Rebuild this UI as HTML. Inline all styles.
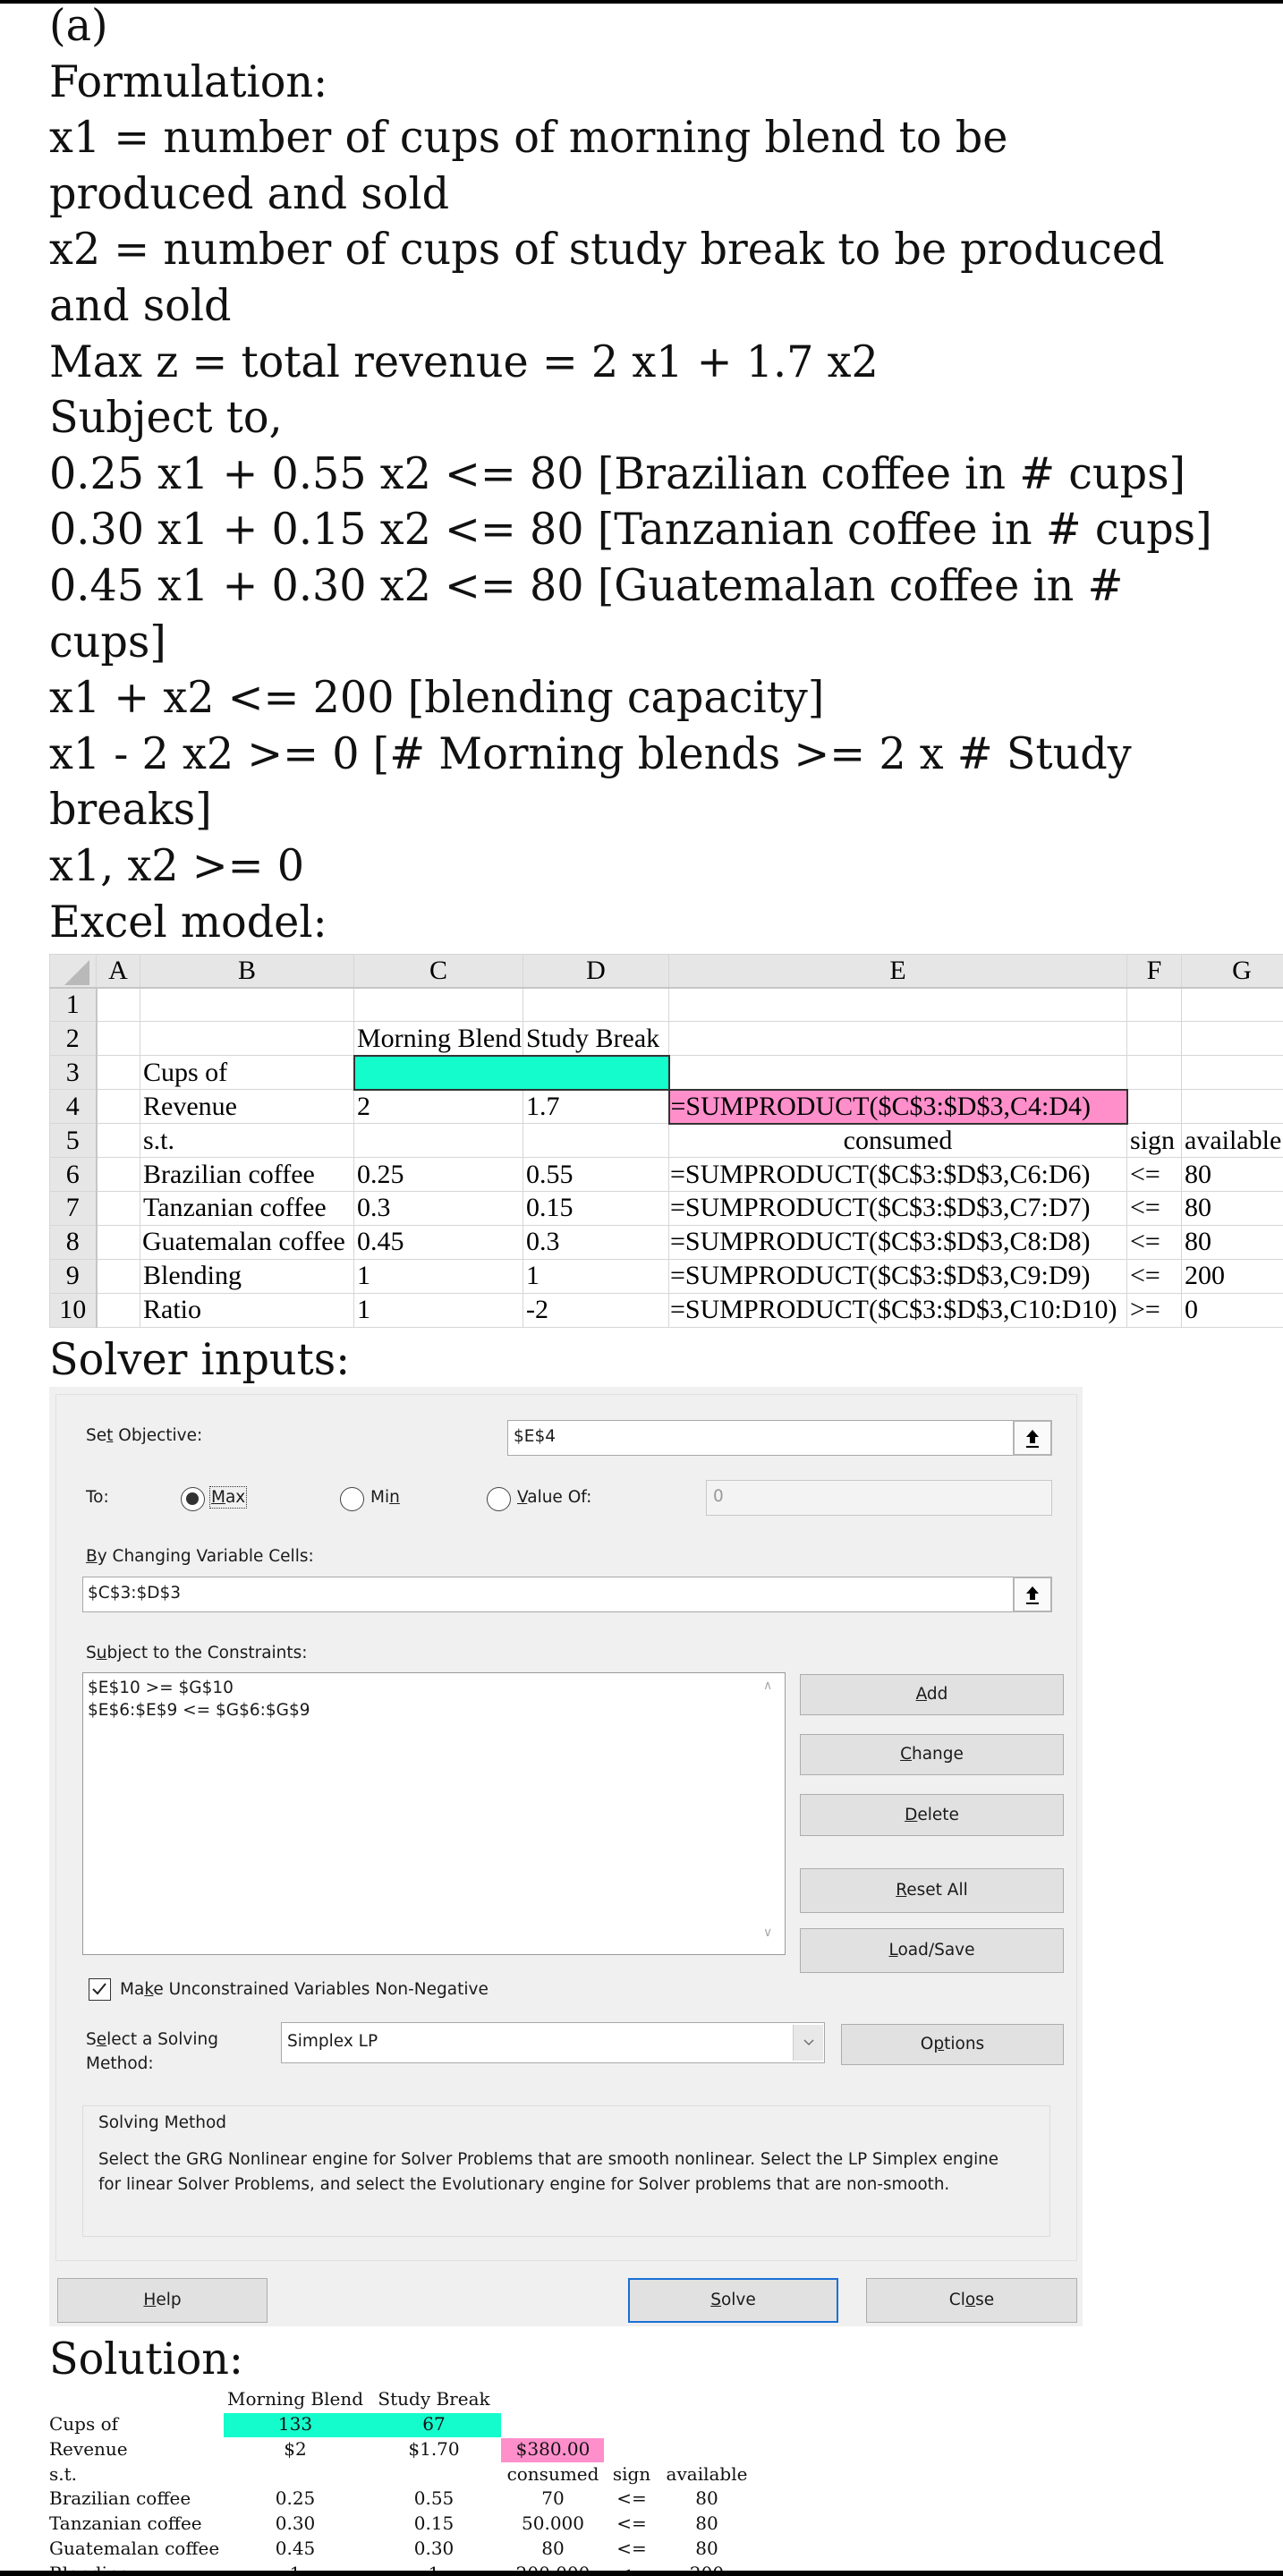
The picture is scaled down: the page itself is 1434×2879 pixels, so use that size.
<!DOCTYPE html>
<html><head><meta charset="utf-8">
<style>
*{margin:0;padding:0;box-sizing:border-box}
html,body{width:1434px;height:2879px;background:#fff;overflow:hidden;position:relative}
body{font-family:"DejaVu Serif",serif;color:#000}
.topbar{position:absolute;left:0;top:0;width:1434px;height:4px;background:#000}
.botbar{position:absolute;left:0;top:2873px;width:1434px;height:6px;background:#000}
.h{position:absolute;left:55px;font-family:"DejaVu Serif",serif;font-size:49px;line-height:62.6px;white-space:nowrap;color:#111;transform:scaleX(0.972);transform-origin:0 0}
/* excel */
table.xl{position:absolute;left:55px;top:1066px;border-collapse:collapse;table-layout:fixed;font-family:"Liberation Serif",serif;font-size:30px;width:1400px}
table.xl td{border:1px solid #d6d6d6;height:37.9px;padding:0 3px;white-space:nowrap;overflow:hidden;line-height:36px}
table.xl tr.hd td{background:#e6e6e6;text-align:center;height:37px;font-size:30px;border-bottom:2px solid #c6c6c6}
table.xl td.rn{background:#e6e6e6;text-align:center;padding:0;font-size:30px;border-right:2px solid #c6c6c6}
.teal{background:#14fccc}
.pink{background:#ff8fcb}
/* dialog */
.dlg{position:absolute;left:55px;top:1550px;width:1155px;height:1050px;background:#f0f0f0}
.inner{position:absolute;left:62px;top:1558px;width:1142px;height:969px;border:1px solid #e0e0e0;background:#f0f0f0}
.s{position:absolute;font-family:"DejaVu Sans",sans-serif;font-size:18.5px;color:#1a1a1a;white-space:nowrap}
.inp{position:absolute;background:#fff;border:1px solid #a8a8a8}
.btn{position:absolute;background:#e1e1e1;border:1px solid #adadad;font-family:"DejaVu Sans",sans-serif;font-size:18.5px;color:#1a1a1a;text-align:center}
.ab{position:absolute;width:44px;height:40px;border:2px solid #b4b4b4;background:#fafafa}
.radio{position:absolute;width:27px;height:27px;border:1.5px solid #444;border-radius:50%;background:#fff}
u{text-decoration:underline}
.sol{position:absolute;font-family:"DejaVu Serif",serif;font-size:20px;white-space:nowrap;color:#111}
.c{position:absolute;transform:translateX(-50%);text-align:center}
</style></head><body>
<div class="topbar"></div>

<div class="h" style="top:-2px">(a)</div>
<div class="h" style="top:60.6px">Formulation:</div>
<div class="h" style="top:123.2px">x1 = number of cups of morning blend to be</div>
<div class="h" style="top:185.8px">produced and sold</div>
<div class="h" style="top:248.4px">x2 = number of cups of study break to be produced</div>
<div class="h" style="top:311px">and sold</div>
<div class="h" style="top:373.6px">Max z = total revenue = 2 x1 + 1.7 x2</div>
<div class="h" style="top:436.2px">Subject to,</div>
<div class="h" style="top:498.8px">0.25 x1 + 0.55 x2 &lt;= 80 [Brazilian coffee in # cups]</div>
<div class="h" style="top:561.4px">0.30 x1 + 0.15 x2 &lt;= 80 [Tanzanian coffee in # cups]</div>
<div class="h" style="top:624px">0.45 x1 + 0.30 x2 &lt;= 80 [Guatemalan coffee in #</div>
<div class="h" style="top:686.6px">cups]</div>
<div class="h" style="top:749.2px">x1 + x2 &lt;= 200 [blending capacity]</div>
<div class="h" style="top:811.8px">x1 - 2 x2 &gt;= 0 [# Morning blends &gt;= 2 x # Study</div>
<div class="h" style="top:874.4px">breaks]</div>
<div class="h" style="top:937px">x1, x2 &gt;= 0</div>
<div class="h" style="top:999.6px">Excel model:</div>

<table class="xl">
<colgroup><col style="width:52px"><col style="width:49px"><col style="width:239px"><col style="width:189px"><col style="width:163px"><col style="width:512px"><col style="width:61px"><col style="width:135px"></colgroup>
<tr class="hd"><td style="position:relative"><svg width="40" height="34" style="position:absolute;left:10px;top:2px"><polygon points="34,4 34,32 6,32" fill="#b9b9b9"/></svg></td><td>A</td><td>B</td><td>C</td><td>D</td><td>E</td><td>F</td><td>G</td></tr>
<tr><td class="rn">1</td><td></td><td></td><td></td><td></td><td></td><td></td><td></td></tr>
<tr><td class="rn">2</td><td></td><td></td><td>Morning Blend</td><td>Study Break</td><td></td><td></td><td></td></tr>
<tr><td class="rn">3</td><td></td><td>Cups of</td><td class="teal" style="border:2px solid #333;border-right:none"></td><td class="teal" style="border:2px solid #333;border-left:none"></td><td></td><td></td><td></td></tr>
<tr><td class="rn">4</td><td></td><td>Revenue</td><td>2</td><td>1.7</td><td class="pink" style="border:2px solid #333;padding:0 1px">=SUMPRODUCT($C$3:$D$3,C4:D4)</td><td></td><td></td></tr>
<tr><td class="rn">5</td><td></td><td>s.t.</td><td></td><td></td><td style="text-align:center">consumed</td><td>sign</td><td>available</td></tr>
<tr><td class="rn">6</td><td></td><td>Brazilian coffee</td><td>0.25</td><td>0.55</td><td style="padding:0 1px">=SUMPRODUCT($C$3:$D$3,C6:D6)</td><td>&lt;=</td><td>80</td></tr>
<tr><td class="rn">7</td><td></td><td>Tanzanian coffee</td><td>0.3</td><td>0.15</td><td style="padding:0 1px">=SUMPRODUCT($C$3:$D$3,C7:D7)</td><td>&lt;=</td><td>80</td></tr>
<tr><td class="rn">8</td><td></td><td style="padding-left:2px">Guatemalan coffee</td><td>0.45</td><td>0.3</td><td style="padding:0 1px">=SUMPRODUCT($C$3:$D$3,C8:D8)</td><td>&lt;=</td><td>80</td></tr>
<tr><td class="rn">9</td><td></td><td>Blending</td><td>1</td><td>1</td><td style="padding:0 1px">=SUMPRODUCT($C$3:$D$3,C9:D9)</td><td>&lt;=</td><td>200</td></tr>
<tr><td class="rn">10</td><td></td><td>Ratio</td><td>1</td><td>-2</td><td style="padding:0 1px">=SUMPRODUCT($C$3:$D$3,C10:D10)</td><td>&gt;=</td><td>0</td></tr>
</table>

<div class="h" style="top:1489px">Solver inputs:</div>

<div class="dlg"></div>
<div class="inner"></div>
<div class="s" style="left:96px;top:1594px">Se<u>t</u> Objective:</div>
<div class="inp" style="left:567px;top:1587px;width:609px;height:40px"></div>
<div class="s" style="left:574px;top:1595px">$E$4</div>
<div class="ab" style="left:1132px;top:1587px"><svg width="40" height="36"><path d="M20 9 L27 17 L23 17 L23 24 L17 24 L17 17 L13 17 Z" fill="#000"/><rect x="13" y="27" width="14" height="2" fill="#000"/></svg></div>

<div class="s" style="left:96px;top:1663px">To:</div>
<div class="radio" style="left:202px;top:1662px"><div style="position:absolute;left:5px;top:5px;width:14px;height:14px;border-radius:50%;background:#333"></div></div>
<div class="s" style="left:236px;top:1663px;outline:1px dotted #333;outline-offset:1px"><u>M</u>ax</div>
<div class="radio" style="left:380px;top:1662px"></div>
<div class="s" style="left:414px;top:1663px">Mi<u>n</u></div>
<div class="radio" style="left:544px;top:1662px"></div>
<div class="s" style="left:578px;top:1663px"><u>V</u>alue Of:</div>
<div class="inp" style="left:789px;top:1654px;width:387px;height:40px;background:#f3f3f3;border-color:#c8c8c8"></div>
<div class="s" style="left:797px;top:1662px;color:#999">0</div>

<div class="s" style="left:96px;top:1729px"><u>B</u>y Changing Variable Cells:</div>
<div class="inp" style="left:92px;top:1762px;width:1084px;height:40px"></div>
<div class="s" style="left:98px;top:1770px">$C$3:$D$3</div>
<div class="ab" style="left:1132px;top:1762px"><svg width="40" height="36"><path d="M20 9 L27 17 L23 17 L23 24 L17 24 L17 17 L13 17 Z" fill="#000"/><rect x="13" y="27" width="14" height="2" fill="#000"/></svg></div>

<div class="s" style="left:96px;top:1837px">S<u>u</u>bject to the Constraints:</div>
<div class="inp" style="left:92px;top:1869px;width:786px;height:316px;border-color:#9a9a9a"></div>
<div class="s" style="left:98px;top:1876px">$E$10 &gt;= $G$10</div>
<div class="s" style="left:98px;top:1901px">$E$6:$E$9 &lt;= $G$6:$G$9</div>
<div class="s" style="left:853px;top:1876px;color:#aaa;font-size:14px">&#8743;</div>
<div class="s" style="left:853px;top:2152px;color:#aaa;font-size:14px">&#8744;</div>

<div class="btn" style="left:894px;top:1871px;width:295px;height:46px;line-height:44px"><u>A</u>dd</div>
<div class="btn" style="left:894px;top:1938px;width:295px;height:46px;line-height:44px"><u>C</u>hange</div>
<div class="btn" style="left:894px;top:2005px;width:295px;height:47px;line-height:45px"><u>D</u>elete</div>
<div class="btn" style="left:894px;top:2088px;width:295px;height:50px;line-height:48px"><u>R</u>eset All</div>
<div class="btn" style="left:894px;top:2155px;width:295px;height:50px;line-height:48px"><u>L</u>oad/Save</div>

<div style="position:absolute;left:99px;top:2211px;width:25px;height:25px;border:1.5px solid #333;background:#fff"><svg width="22" height="22"><path d="M4 11 L9 16 L18 5" stroke="#222" stroke-width="2" fill="none"/></svg></div>
<div class="s" style="left:134px;top:2213px">Ma<u>k</u>e Unconstrained Variables Non-Negative</div>

<div class="s" style="left:96px;top:2269px">S<u>e</u>lect a Solving</div>
<div class="s" style="left:96px;top:2296px">Method:</div>
<div class="inp" style="left:314px;top:2260px;width:608px;height:46px"></div>
<div class="s" style="left:321px;top:2271px">Simplex LP</div>
<div style="position:absolute;left:886px;top:2263px;width:34px;height:40px;background:#e8e8e8;border-left:1px solid #ccc"><svg width="34" height="40"><path d="M12 17 L17 22 L22 17" stroke="#666" stroke-width="1.3" fill="none"/></svg></div>
<div class="btn" style="left:940px;top:2262px;width:249px;height:46px;line-height:44px">O<u>p</u>tions</div>

<div style="position:absolute;left:92px;top:2353px;width:1082px;height:147px;border:1px solid #dcdcdc"></div>
<div class="s" style="left:110px;top:2362px">Solving Method</div>
<div class="s" style="left:110px;top:2403px;font-size:18.3px">Select the GRG Nonlinear engine for Solver Problems that are smooth nonlinear. Select the LP Simplex engine</div>
<div class="s" style="left:110px;top:2431px;font-size:18.3px">for linear Solver Problems, and select the Evolutionary engine for Solver problems that are non-smooth.</div>

<div class="btn" style="left:64px;top:2546px;width:235px;height:50px;line-height:48px"><u>H</u>elp</div>
<div class="btn" style="left:702px;top:2546px;width:235px;height:50px;line-height:46px;border:2px solid #1a6fd6"><u>S</u>olve</div>
<div class="btn" style="left:968px;top:2546px;width:236px;height:50px;line-height:48px">Cl<u>o</u>se</div>

<div class="h" style="top:2606px">Solution:</div>

<div style="position:absolute;left:250px;top:2697px;width:310px;height:27px" class="teal"></div>
<div style="position:absolute;left:560px;top:2725px;width:115px;height:27px" class="pink"></div>
<div class="sol" style="left:0;top:0;width:1434px">
<div class="c" style="left:330px;top:2669px">Morning Blend</div>
<div class="c" style="left:485px;top:2669px">Study Break</div>
<div style="position:absolute;left:55px;top:2697px">Cups of</div>
<div class="c" style="left:330px;top:2697px">133</div><div class="c" style="left:485px;top:2697px">67</div>
<div style="position:absolute;left:55px;top:2725px">Revenue</div>
<div class="c" style="left:330px;top:2725px">$2</div><div class="c" style="left:485px;top:2725px">$1.70</div><div class="c" style="left:618px;top:2725px">$380.00</div>
<div style="position:absolute;left:55px;top:2753px">s.t.</div>
<div class="c" style="left:618px;top:2753px">consumed</div><div class="c" style="left:706px;top:2753px">sign</div><div class="c" style="left:790px;top:2753px">available</div>
<div style="position:absolute;left:55px;top:2780px">Brazilian coffee</div>
<div class="c" style="left:330px;top:2780px">0.25</div><div class="c" style="left:485px;top:2780px">0.55</div><div class="c" style="left:618px;top:2780px">70</div><div class="c" style="left:706px;top:2780px">&lt;=</div><div class="c" style="left:790px;top:2780px">80</div>
<div style="position:absolute;left:55px;top:2808px">Tanzanian coffee</div>
<div class="c" style="left:330px;top:2808px">0.30</div><div class="c" style="left:485px;top:2808px">0.15</div><div class="c" style="left:618px;top:2808px">50.000</div><div class="c" style="left:706px;top:2808px">&lt;=</div><div class="c" style="left:790px;top:2808px">80</div>
<div style="position:absolute;left:55px;top:2836px">Guatemalan coffee</div>
<div class="c" style="left:330px;top:2836px">0.45</div><div class="c" style="left:485px;top:2836px">0.30</div><div class="c" style="left:618px;top:2836px">80</div><div class="c" style="left:706px;top:2836px">&lt;=</div><div class="c" style="left:790px;top:2836px">80</div>
<div style="position:absolute;left:55px;top:2864px">Blending</div>
<div class="c" style="left:330px;top:2864px">1</div><div class="c" style="left:485px;top:2864px">1</div><div class="c" style="left:618px;top:2864px">200.000</div><div class="c" style="left:706px;top:2864px">&lt;=</div><div class="c" style="left:790px;top:2864px">200</div>
</div>
<div class="botbar"></div>
</body></html>
